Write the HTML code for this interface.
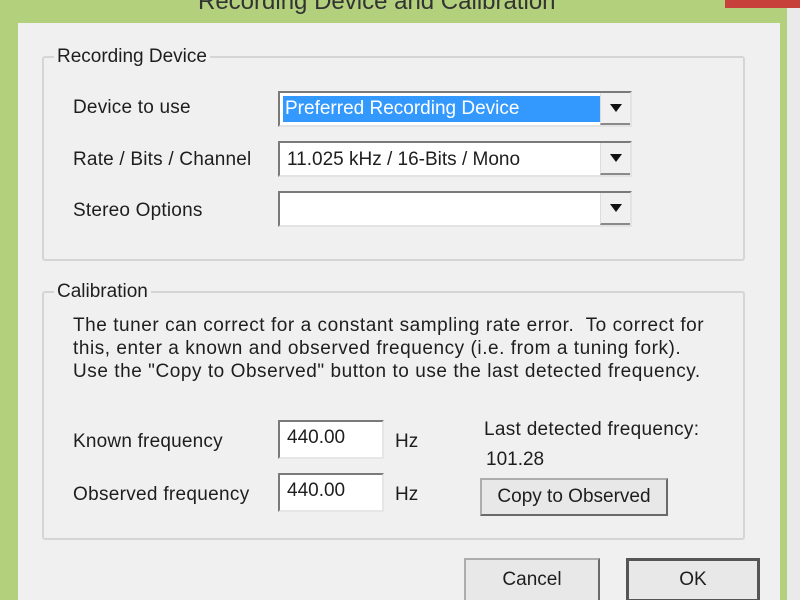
<!DOCTYPE html>
<html><head><style>
html,body{margin:0;width:800px;height:600px;overflow:hidden}
body{background:#eaeaea;font-family:"Liberation Sans",sans-serif;position:relative;color:#1e1e1e}
.a{position:absolute}
.frame{left:0;top:0;width:787px;height:600px;background:#b3d07c}
.panel{left:18px;top:23px;width:762px;height:577px;background:#f0f0f0}
.t{font-size:19px;white-space:nowrap}
.grp{border:2px solid #d5d5d5;border-radius:3px}
.lg{background:#f0f0f0;padding:0 3px}
.cb{background:#fff;border:2px solid #7a7a7a;border-right-color:#e3e3e3;border-bottom-color:#e3e3e3;height:32px;width:350px}
.arr{position:absolute;right:0;top:0;width:30px;height:32px;background:#f0f0f0;border-left:1px solid #ddd;border-bottom:2px solid #8a8a8a;box-sizing:border-box}
.arr:after{content:"";position:absolute;left:9px;top:11px;border-left:6px solid transparent;border-right:6px solid transparent;border-top:8px solid #111}
.ed{background:#fff;border:2px solid #7a7a7a;border-right-color:#e6e6e6;border-bottom-color:#e6e6e6;width:102px;height:35px}
.btn{background:#e8e8e8;border:2px solid #adadad;border-right-color:#6a6a6a;border-bottom-color:#6a6a6a;text-align:center;font-size:19px;box-sizing:border-box}
</style></head><body>
<div class="a frame"></div>
<div class="a t" style="left:198px;top:-12px;font-size:24px;color:#333">Recording Device and Calibration</div>
<div class="a" style="left:725px;top:0;width:75px;height:8px;background:#c7403a"></div>
<div class="a panel"></div>

<div class="a grp" style="left:42px;top:56px;width:699px;height:201px"></div>
<div class="a t lg" style="left:54px;top:46px">Recording Device</div>
<div class="a t" style="left:73px;top:97px;letter-spacing:0.2px">Device to use</div>
<div class="a t" style="left:73px;top:149px;letter-spacing:0.2px">Rate / Bits / Channel</div>
<div class="a t" style="left:73px;top:200px;letter-spacing:0.2px">Stereo Options</div>
<div class="a cb" style="left:278px;top:91px"><div class="a" style="left:3px;top:3px;width:318px;height:26px;background:#3399ff"></div><div class="a t" style="left:5px;top:5px;color:#fff">Preferred Recording Device</div><div class="arr"></div></div>
<div class="a cb" style="left:278px;top:141px"><div class="a t" style="left:7px;top:6px">11.025 kHz / 16-Bits / Mono</div><div class="arr"></div></div>
<div class="a cb" style="left:278px;top:191px"><div class="arr"></div></div>

<div class="a grp" style="left:42px;top:291px;width:699px;height:245px"></div>
<div class="a t lg" style="left:54px;top:281px">Calibration</div>
<div class="a t" style="left:73px;top:314px;line-height:23px;letter-spacing:0.55px">The tuner can correct for a constant sampling rate error.&nbsp; To correct for<br>this, enter a known and observed frequency (i.e. from a tuning fork).<br>Use the "Copy to Observed" button to use the last detected frequency.</div>
<div class="a t" style="left:73px;top:431px;letter-spacing:0.2px">Known frequency</div>
<div class="a t" style="left:73px;top:484px;letter-spacing:0.3px">Observed frequency</div>
<div class="a ed" style="left:278px;top:420px"><div class="a t" style="left:7px;top:5px">440.00</div></div>
<div class="a ed" style="left:278px;top:473px"><div class="a t" style="left:7px;top:5px">440.00</div></div>
<div class="a t" style="left:395px;top:431px">Hz</div>
<div class="a t" style="left:395px;top:484px">Hz</div>
<div class="a t" style="left:484px;top:419px;letter-spacing:0.3px">Last detected frequency:</div>
<div class="a t" style="left:486px;top:449px">101.28</div>
<div class="a btn" style="left:480px;top:478px;width:188px;height:38px;line-height:34px">Copy to Observed</div>

<div class="a btn" style="left:464px;top:558px;width:136px;height:44px;line-height:40px">Cancel</div>
<div class="a btn" style="left:626px;top:558px;width:134px;height:44px;line-height:38px;border:3px solid #555">OK</div>
</body></html>
